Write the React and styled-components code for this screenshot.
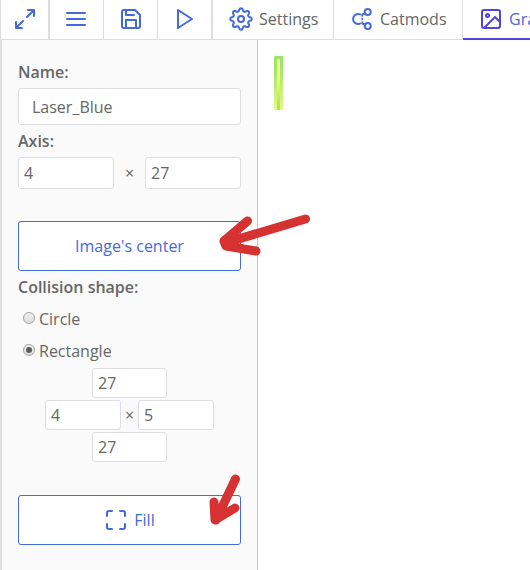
import React from "react";
import styled, { createGlobalStyle, css } from "styled-components";

const Global = createGlobalStyle`
  * { box-sizing: border-box; }
  body { margin: 0; background: #fff; overflow: hidden; }
`;

const Page = styled.div`
  position: relative;
  display: flex;
  flex-direction: column;
  width: 530px;
  height: 570px;
  overflow: hidden;
  color: #666;
  font: 16px/24px "Open Sans", sans-serif;
`;

const Toolbar = styled.nav`
  display: flex;
  flex: none;
  height: 40px;
  border-bottom: 1px solid #dedee2;
  border-left: 1px solid #dedee2;
`;

const Tab = styled.div`
  display: flex;
  flex: none;
  align-items: center;
  gap: 6px;
  width: ${(p) => p.$width}px;
  height: ${(p) => (p.$active ? 40 : 39)}px;
  padding: 0 0 1px ${(p) => p.$pad}px;
  white-space: nowrap;
  border-right: ${(p) => p.$edge || 1}px solid #dedee2;
  ${(p) => p.$active && css`
    color: #446adb;
    border-right: 0;
    border-bottom: 2px solid #5144db;
    padding-bottom: 0;
  `}
`;

const Glyph = styled.svg`
  flex: none;
  display: block;
  width: 24px;
  height: 24px;
  overflow: visible;
  fill: none;
  stroke: ${(p) => p.$color || "#446adb"};
  stroke-width: 2;
  stroke-linecap: round;
  stroke-linejoin: round;
`;

const Body = styled.div`
  display: flex;
  flex: 1;
  min-height: 0;
`;

const Sidebar = styled.aside`
  display: flex;
  flex-direction: column;
  width: 258px;
  padding: 20px 16px 0;
  background: #fafafa;
  border-left: 2px solid #dedee2;
  border-right: 1px solid #c4c4c4;
`;

const Caption = styled.label`
  height: 24px;
  margin: ${(p) => p.$before || 0}px 0 4px;
  font-weight: 600;
`;

const Field = styled.input`
  width: ${(p) => p.$width}px;
  height: ${(p) => p.$height || 30}px;
  padding: 0 0 0 ${(p) => p.$pad || 5}px;
  color: #666;
  font: inherit;
  background: #fff;
  border: 1px solid #dedee2;
  border-radius: 3px;
  outline: 0;
`;

const Row = styled.div`
  display: flex;
  align-items: center;
  justify-content: ${(p) => p.$justify || "center"};
  margin-bottom: ${(p) => p.$after || 0}px;
`;

const Times = styled.span`
  width: ${(p) => p.$width}px;
  text-align: center;
`;

const Action = styled.button`
  display: flex;
  flex: none;
  align-items: center;
  justify-content: center;
  gap: 6px;
  height: 50px;
  padding: 0;
  color: #446adb;
  font: inherit;
  background: #fff;
  border: 1px solid #446adb;
  border-radius: 3px;
`;

const Option = styled.div`
  display: flex;
  align-items: center;
  gap: 4px;
  height: 32px;
  padding-left: 5px;
`;

const Radio = styled.span`
  display: flex;
  align-items: center;
  justify-content: center;
  width: 12px;
  height: 12px;
  margin-top: -2px;
  background: linear-gradient(#eee, #dcdcdc);
  border: 1px solid #a6a6a6;
  border-radius: 50%;
  &::after {
    content: "";
    width: 6px;
    height: 6px;
    border-radius: 50%;
    background: ${(p) => (p.$checked ? "#5c5c5c" : "transparent")};
  }
`;

const Bounds = styled.div`
  display: flex;
  flex-direction: column;
  gap: 2px;
  margin: 1px 0 33px;
`;

const Canvas = styled.main`
  flex: 1;
  padding: 16px;
`;

const Sprite = styled.svg`
  display: block;
  width: 9px;
  height: 54px;
`;

const Marks = styled.svg`
  position: absolute;
  inset: 0;
  pointer-events: none;
  fill: none;
  stroke: #d63232;
  stroke-width: 9;
  stroke-linecap: round;
  stroke-linejoin: round;
`;

// Eight rounded teeth, traced as a wave around a circle.
const gearOutline = Array.from({ length: 96 }, (_, i) => {
  const angle = (i / 96) * Math.PI * 2;
  const wave = Math.cos(angle * 8);
  const radius = 9.3 + 1.4 * Math.sign(wave) * Math.abs(wave) ** 0.6;
  return `${(12 + radius * Math.sin(angle)).toFixed(2)},${(12 - radius * Math.cos(angle)).toFixed(2)}`;
}).join(" ");

const Expand = () => (
  <Glyph viewBox="0 0 24 24"><path d="M15 3h6v6M9 21H3v-6M21 3l-7 7M3 21l7-7" /></Glyph>
);
const Menu = () => (
  <Glyph viewBox="0 0 24 24"><path d="M3 12h18M3 6h18M3 18h18" /></Glyph>
);
const Save = () => (
  <Glyph viewBox="0 0 24 24">
    <path d="M19 21H5a2 2 0 0 1-2-2V5a2 2 0 0 1 2-2h11l5 5v11a2 2 0 0 1-2 2z" />
    <path d="M17 21v-8H7v8M7 3v5h8" />
  </Glyph>
);
const Play = () => (
  <Glyph viewBox="0 0 24 24"><path d="M5 3l14 9-14 9z" /></Glyph>
);
const Gear = () => (
  <Glyph viewBox="0 0 24 24">
    <circle cx="12" cy="12" r="3" />
    <polygon points={gearOutline} />
  </Glyph>
);
const Mods = () => (
  <Glyph viewBox="0 0 24 24">
    <path d="M10 7.4A5 5 0 1 0 10 16.600" />
    <path strokeWidth="1.6" strokeLinecap="butt" d="M12.300 7.500v2.300M12.300 11v2.300M12.300 14.500v2.300" />
    <path d="M12.300 7.500l3-1M12.300 16.500l3 1" />
    <circle cx="17.700" cy="5" r="3" />
    <circle cx="17.700" cy="19" r="3" />
  </Glyph>
);
const Picture = () => (
  <Glyph viewBox="0 0 24 24" $color="#5144db">
    <rect x="3" y="3" width="18" height="18" rx="2" />
    <circle cx="8.5" cy="8.5" r="1.5" />
    <path d="M21 15l-5-5L5 21" />
  </Glyph>
);
const Corners = () => (
  <Glyph viewBox="0 0 24 24">
    <path d="M8 3H5a2 2 0 0 0-2 2v3M21 8V5a2 2 0 0 0-2-2h-3M16 21h3a2 2 0 0 0 2-2v-3M3 16v3a2 2 0 0 0 2 2h3" />
  </Glyph>
);

export default function App() {
  return (
    <>
      <Global />
      <Page>
        <Toolbar>
          <Tab $width={49} $pad={12} $edge={2}><Expand /></Tab>
          <Tab $width={54} $pad={14}><Menu /></Tab>
          <Tab $width={54} $pad={15}><Save /></Tab>
          <Tab $width={55} $pad={15} $edge={2}><Play /></Tab>
          <Tab $width={121} $pad={16}><Gear />Settings</Tab>
          <Tab $width={129} $pad={16}><Mods />Catmods</Tab>
          <Tab $width={140} $pad={16} $active><Picture />Graphic asset</Tab>
        </Toolbar>
        <Body>
          <Sidebar>
            <Caption>Name:</Caption>
            <Field $height={37} $pad={13} defaultValue="Laser_Blue" />
            <Caption $before={4}>Axis:</Caption>
            <Row $justify="space-between" $after={32}>
              <Field $width={96} $height={32} defaultValue="4" />
              <Times $width={31}>×</Times>
              <Field $width={96} $height={32} defaultValue="27" />
            </Row>
            <Action>Image's center</Action>
            <Caption $before={4}>Collision shape:</Caption>
            <Option><Radio />Circle</Option>
            <Option><Radio $checked />Rectangle</Option>
            <Bounds>
              <Row><Field $width={75} defaultValue="27" /></Row>
              <Row>
                <Field $width={76} defaultValue="4" />
                <Times $width={17}>×</Times>
                <Field $width={76} defaultValue="5" />
              </Row>
              <Row><Field $width={75} defaultValue="27" /></Row>
            </Bounds>
            <Action><Corners />Fill</Action>
          </Sidebar>
          <Canvas>
            <Sprite viewBox="0 0 9 54">
              <defs>
                <linearGradient id="beam" x1="0" y1="0" x2="0" y2="1">
                  <stop offset="0" stopColor="#98e466" />
                  <stop offset="0.3" stopColor="#a4e86c" />
                  <stop offset="1" stopColor="#eaf87a" />
                </linearGradient>
                <linearGradient id="core" x1="0" y1="0" x2="0" y2="1">
                  <stop offset="0" stopColor="#f4ff90" />
                  <stop offset="0.4" stopColor="#eefa7c" />
                  <stop offset="1" stopColor="#98e466" />
                </linearGradient>
              </defs>
              <rect width="9" height="54" rx="1" fill="url(#beam)" />
              <rect x="3" y="3" width="3" height="51" rx="1" fill="url(#core)" />
            </Sprite>
          </Canvas>
        </Body>
        <Marks width="530" height="570" viewBox="0 0 530 570">
          <path d="M305.500 219L225 243M247.500 221L224 241L226 246L256 251" />
          <path d="M235.500 479L216 520M214 502L215 520L235 508" />
        </Marks>
      </Page>
    </>
  );
}
